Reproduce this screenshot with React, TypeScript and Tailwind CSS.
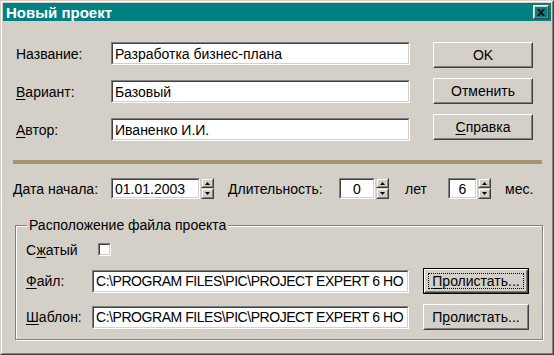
import React from "react";

function Field({
  className,
  align = "left",
  children,
}: {
  className: string;
  align?: "left" | "center";
  children?: React.ReactNode;
}) {
  return (
    <div
      className={`border border-t-[#808080] border-l-[#808080] border-b-white border-r-white ${className}`}
    >
      <div
        className={`h-full border border-t-[#404040] border-l-[#404040] border-b-[#d4d0c8] border-r-[#d4d0c8] bg-white flex items-center overflow-hidden whitespace-nowrap ${
          align === "center" ? "justify-center" : "pl-[2px]"
        }`}
      >
        {children}
      </div>
    </div>
  );
}

function Button({
  className,
  children,
}: {
  className: string;
  children: React.ReactNode;
}) {
  return (
    <div
      className={`border border-t-white border-l-white border-r-[#404040] border-b-[#404040] ${className}`}
    >
      <div className="h-full border border-t-[#d4d0c8] border-l-[#d4d0c8] border-r-[#808080] border-b-[#808080] flex items-center justify-center">
        {children}
      </div>
    </div>
  );
}

function DefaultButton({
  className,
  children,
}: {
  className: string;
  children: React.ReactNode;
}) {
  return (
    <div className={`border border-black ${className}`}>
      <div className="h-full border border-t-white border-l-white border-r-[#404040] border-b-[#404040]">
        <div className="h-full border border-t-[#d4d0c8] border-l-[#d4d0c8] border-r-[#808080] border-b-[#808080] p-[2px]">
          <div className="h-full border border-dotted border-black flex items-center justify-center">
            {children}
          </div>
        </div>
      </div>
    </div>
  );
}

function Arrow({ up }: { up: boolean }) {
  return (
    <svg width="5" height="3" viewBox="0 0 5 3" className="block">
      {up ? (
        <path d="M2.5 0L5 3H0z" fill="#000" />
      ) : (
        <path d="M0 0h5L2.5 3z" fill="#000" />
      )}
    </svg>
  );
}

function SpinHalf({ up, className }: { up: boolean; className: string }) {
  return (
    <div
      className={`border border-t-[#d4d0c8] border-l-[#d4d0c8] border-r-[#404040] border-b-[#404040] ${className}`}
    >
      <div className="h-full border border-t-white border-l-white border-r-[#808080] border-b-[#808080] flex items-center justify-center">
        <Arrow up={up} />
      </div>
    </div>
  );
}

function Spinner() {
  return (
    <div className="ml-px w-[13px] h-[21px] flex flex-col">
      <SpinHalf up className="h-[10px]" />
      <SpinHalf up={false} className="h-[11px]" />
    </div>
  );
}

function U({ children }: { children: React.ReactNode }) {
  return <span className="underline underline-offset-[2px]">{children}</span>;
}

export default function App() {
  return (
    <div className="w-[554px] h-[355px] bg-[#d4d0c8] font-['Liberation_Sans',Arial,sans-serif] text-[14px] leading-none text-black select-none">
      <div className="w-full h-full border border-t-[#d4d0c8] border-l-[#d4d0c8] border-r-[#404040] border-b-[#404040]">
        <div className="w-full h-full border border-t-white border-l-white border-r-[#808080] border-b-[#808080] p-px flex flex-col">
          {/* Title bar */}
          <div className="h-[18px] bg-[#008080] flex items-center justify-between pl-[3px] pr-[2px]">
            <span className="text-white font-bold text-[15px] leading-none">
              Новый проект
            </span>
            <Button className="w-[16px] h-[14px]">
              <svg width="8" height="7" viewBox="0 0 8 7" className="block">
                <path
                  d="M0 0h2l2 2.3L6 0h2L5 3.5 8 7H6L4 4.7 2 7H0l3-3.5z"
                  fill="#000"
                />
              </svg>
            </Button>
          </div>

          {/* Top section */}
          <div className="flex mt-[21px] pl-[13px]">
            <div className="flex flex-col gap-[15px]">
              <div className="flex items-center h-[23px]">
                <span className="w-[95px]">Название:</span>
                <Field className="w-[299px] h-[23px]">
                  Разработка бизнес-плана
                </Field>
              </div>
              <div className="flex items-center h-[23px]">
                <span className="w-[95px]">
                  <U>В</U>ариант:
                </span>
                <Field className="w-[299px] h-[23px]">Базовый</Field>
              </div>
              <div className="flex items-center h-[23px]">
                <span className="w-[95px]">
                  <U>А</U>втор:
                </span>
                <Field className="w-[299px] h-[23px]">Иваненко И.И.</Field>
              </div>
            </div>
            <div className="ml-[23px] flex flex-col gap-[10px]">
              <Button className="w-[100px] h-[26px]">OK</Button>
              <Button className="w-[100px] h-[26px]">Отменить</Button>
              <Button className="w-[100px] h-[26px]">
                <span>
                  <U>С</U>правка
                </span>
              </Button>
            </div>
          </div>

          {/* Separator */}
          <div className="mt-[19px] ml-[10px] w-[529px] h-[4px] bg-[#a69372]" />

          {/* Date row */}
          <div className="flex items-center mt-[14px] pl-[10px] h-[21px]">
            <span className="w-[98px]">
              <U>Д</U>ата начала:
            </span>
            <Field className="w-[89px] h-[21px]">01.01.2003</Field>
            <Spinner />
            <span className="ml-[14px] w-[111px]">Длительность:</span>
            <Field className="w-[36px] h-[21px]" align="center">
              0
            </Field>
            <Spinner />
            <span className="ml-[16px] w-[43px]">лет</span>
            <Field className="w-[29px] h-[21px]" align="center">
              6
            </Field>
            <Spinner />
            <span className="ml-[14px]">мес.</span>
          </div>

          {/* Group box */}
          <div className="relative mt-[26px] ml-[12px] w-[528px] h-[115px] border border-[#808080] shadow-[inset_1px_1px_0_#fff,1px_1px_0_#fff] pt-[17px] pl-[10px]">
            <span className="absolute top-[-9px] left-[11px] px-[2px] bg-[#d4d0c8] leading-[16px]">
              Расположение файла проекта
            </span>
            <div className="flex items-center h-[13px]">
              <span className="w-[72px]">
                С<U>ж</U>атый
              </span>
              <div className="w-[13px] h-[13px] border border-t-[#808080] border-l-[#808080] border-b-white border-r-white">
                <div className="h-full border border-t-[#404040] border-l-[#404040] border-b-[#d4d0c8] border-r-[#d4d0c8] bg-white" />
              </div>
            </div>
            <div className="flex items-center h-[26px] mt-[12px]">
              <span className="w-[66px]">
                <U>Ф</U>айл:
              </span>
              <Field className="w-[317px] h-[23px]">
                <span className="tracking-[-0.45px]">
                  C:\PROGRAM FILES\PIC\PROJECT EXPERT 6 HO
                </span>
              </Field>
              <DefaultButton className="ml-[14px] w-[106px] h-[26px]">
                <span>
                  <U>П</U>ролистать...
                </span>
              </DefaultButton>
            </div>
            <div className="flex items-center h-[26px] mt-[10px]">
              <span className="w-[66px]">
                <U>Ш</U>аблон:
              </span>
              <Field className="w-[317px] h-[23px]">
                <span className="tracking-[-0.45px]">
                  C:\PROGRAM FILES\PIC\PROJECT EXPERT 6 HO
                </span>
              </Field>
              <Button className="ml-[14px] w-[106px] h-[26px]">
                <span>
                  П<U>р</U>олистать...
                </span>
              </Button>
            </div>
          </div>
        </div>
      </div>
    </div>
  );
}
